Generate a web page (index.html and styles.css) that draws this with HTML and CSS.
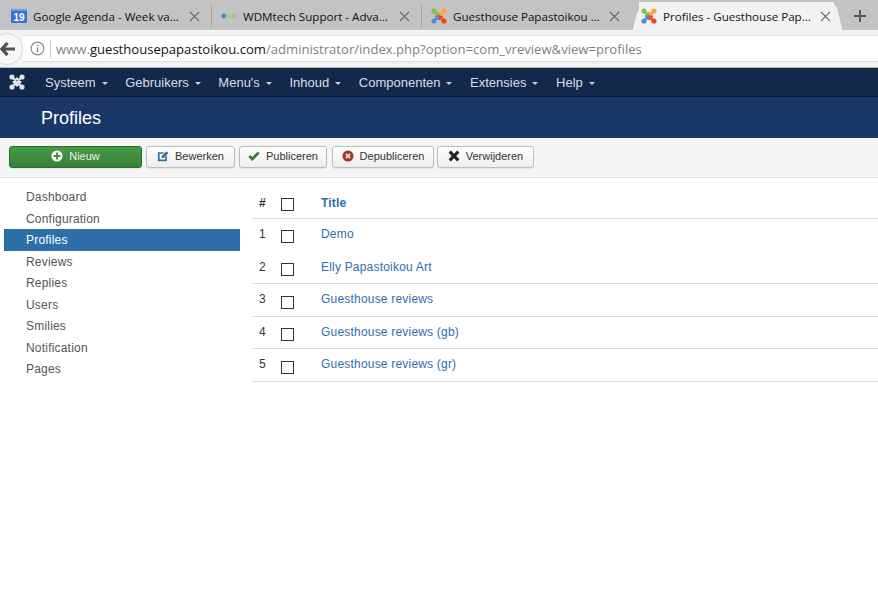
FILE: index.html
```html
<!DOCTYPE html>
<html lang="nl">
<head>
<meta charset="utf-8">
<title>Profiles - Guesthouse Papastoikou</title>
<link rel="stylesheet" href="styles.css">
</head>
<body>
<svg class="defs" width="0" height="0">
  <defs>
    <g id="joomla" fill="none" stroke-width="2.3">
      <path stroke="#7ac143" d="M3 3L8.5 8.5M4.5 8L8 4.5"/>
      <circle cx="3" cy="3" r="2.6" fill="#7ac143"/>
      <path stroke="#f9a541" d="M13 3L7.5 8.5M8 4.5L11.5 8"/>
      <circle cx="13" cy="3" r="2.6" fill="#f9a541"/>
      <path stroke="#5091cd" d="M3 13L8.5 7.5M8 11.5L4.5 8"/>
      <circle cx="3" cy="13" r="2.6" fill="#5091cd"/>
      <path stroke="#f44321" d="M13 13L7.5 7.5M11.5 8L8 11.5"/>
      <circle cx="13" cy="13" r="2.6" fill="#f44321"/>
    </g>
    <g id="close">
      <path d="M1 1 L11 11 M11 1 L1 11" fill="none" stroke="#5f5f5f" stroke-width="1.2"/>
    </g>
  </defs>
</svg>

<div class="tabstrip">
  <div class="tab">
    <svg class="fav" viewBox="0 0 16 16"><rect y="1" width="16" height="14" rx="1" fill="#3a6fd8"/><rect y="1" width="16" height="2" fill="#6f9ae8"/><text x="8" y="13" class="cal">19</text></svg>
    <span class="tab-title">Google Agenda - Week va...</span>
    <svg class="x" viewBox="0 0 12 12"><use href="#close"/></svg>
  </div>
  <div class="tab">
    <svg class="fav" viewBox="0 0 16 16"><circle cx="2.8" cy="8" r="2.4" fill="#3b8fe0"/><circle cx="8.2" cy="8" r="2.4" fill="#a5d75c"/><circle cx="13.4" cy="8" r="2.4" fill="#b3b3b3"/></svg>
    <span class="tab-title">WDMtech Support - Adva...</span>
    <svg class="x" viewBox="0 0 12 12"><use href="#close"/></svg>
  </div>
  <div class="tab">
    <svg class="fav" viewBox="0 0 16 16"><use href="#joomla"/></svg>
    <span class="tab-title">Guesthouse Papastoikou ...</span>
    <svg class="x" viewBox="0 0 12 12"><use href="#close"/></svg>
  </div>
  <div class="tab tab-active">
    <svg class="fav" viewBox="0 0 16 16"><use href="#joomla"/></svg>
    <span class="tab-title">Profiles - Guesthouse Pap...</span>
    <svg class="x" viewBox="0 0 12 12"><use href="#close"/></svg>
  </div>
  <svg class="plus" viewBox="0 0 12 12"><path d="M6 0V12M0 6H12" stroke="#5a5a5a" stroke-width="2"/></svg>
</div>

<div class="addressbar">
  <div class="back">
    <svg viewBox="0 0 15 14" width="15" height="14"><path d="M7.5 1 L2 7 L7.5 13 M2.5 7 H15" fill="none" stroke="#505050" stroke-width="3.2"/></svg>
  </div>
  <div class="omnibox">
    <svg class="info" viewBox="0 0 16 16"><circle cx="8" cy="8" r="6.8" fill="none" stroke="#8a8a8a" stroke-width="1.2"/><path d="M8 7V12M8 4V5.6" stroke="#8a8a8a" stroke-width="1.6"/></svg>
    <span class="url"><span class="url-dim">www.</span><span class="url-host">guesthousepapastoikou.com</span><span class="url-dim">/administrator/index.php?option=com_vreview&amp;view=profiles</span></span>
  </div>
</div>

<nav class="navbar">
  <svg class="brand" viewBox="0 0 16 16"><g fill="#dfe3ea"><circle cx="3" cy="3" r="2.6"/><circle cx="13" cy="3" r="2.6"/><circle cx="3" cy="13" r="2.6"/><circle cx="13" cy="13" r="2.6"/></g><path d="M3 3L13 13M13 3L3 13M8 4.5L11.5 8L8 11.5L4.5 8Z" fill="none" stroke="#dfe3ea" stroke-width="2"/></svg>
  <a class="nav-item">Systeem<i class="caret"></i></a>
  <a class="nav-item">Gebruikers<i class="caret"></i></a>
  <a class="nav-item">Menu's<i class="caret"></i></a>
  <a class="nav-item">Inhoud<i class="caret"></i></a>
  <a class="nav-item">Componenten<i class="caret"></i></a>
  <a class="nav-item">Extensies<i class="caret"></i></a>
  <a class="nav-item">Help<i class="caret"></i></a>
</nav>

<header class="titlebar"><h1>Profiles</h1></header>

<div class="toolbar">
  <button class="btn btn-new"><svg class="ico" viewBox="0 0 14 14"><circle cx="7" cy="7" r="6.5" fill="#fff"/><path d="M7 3V11M3 7H11" stroke="#3f8c3c" stroke-width="2.2"/></svg>Nieuw</button>
  <button class="btn btn-edit"><svg class="ico" viewBox="0 0 14 14"><path d="M1 2.5H8.5L6.5 4.5H3V11H9.5V8L11.5 6V13H1Z" fill="#2f6f97"/><path d="M5.5 7L11 1.5L13.2 3.7L7.7 9.2H5.5Z" fill="#2f6f97"/></svg>Bewerken</button>
  <button class="btn btn-pub"><svg class="ico" viewBox="0 0 14 14"><path d="M1.5 7L5 10.5L12.5 3" fill="none" stroke="#378137" stroke-width="3.2"/></svg>Publiceren</button>
  <button class="btn btn-unpub"><svg class="ico" viewBox="0 0 14 14"><circle cx="7" cy="7" r="6.5" fill="#a03b22"/><path d="M4.6 4.6L9.4 9.4M9.4 4.6L4.6 9.4" stroke="#f0e0d8" stroke-width="2"/></svg>Depubliceren</button>
  <button class="btn btn-del"><svg class="ico" viewBox="0 0 14 14"><path d="M2 2L12 12M12 2L2 12" stroke="#222" stroke-width="3.6"/></svg>Verwijderen</button>
</div>

<main class="content">
  <ul class="sidebar">
    <li>Dashboard</li>
    <li>Configuration</li>
    <li class="active">Profiles</li>
    <li>Reviews</li>
    <li>Replies</li>
    <li>Users</li>
    <li>Smilies</li>
    <li>Notification</li>
    <li>Pages</li>
  </ul>
  <table class="list">
    <thead>
      <tr><th class="c-num">#</th><th class="c-check"><span class="box"></span></th><th class="c-title">Title</th></tr>
    </thead>
    <tbody>
      <tr><td class="c-num">1</td><td class="c-check"><span class="box"></span></td><td class="c-title">Demo</td></tr>
      <tr><td class="c-num">2</td><td class="c-check"><span class="box"></span></td><td class="c-title">Elly Papastoikou Art</td></tr>
      <tr><td class="c-num">3</td><td class="c-check"><span class="box"></span></td><td class="c-title">Guesthouse reviews</td></tr>
      <tr><td class="c-num">4</td><td class="c-check"><span class="box"></span></td><td class="c-title">Guesthouse reviews (gb)</td></tr>
      <tr><td class="c-num">5</td><td class="c-check"><span class="box"></span></td><td class="c-title">Guesthouse reviews (gr)</td></tr>
    </tbody>
  </table>
</main>
</body>
</html>
```

FILE: styles.css
```css
* { box-sizing: border-box; }
html, body { margin: 0; padding: 0; background: #fff; overflow: hidden; }
body { width: 878px; height: 600px; font-family: "Liberation Sans", Arial, sans-serif; }
.defs { position: absolute; }

/* browser tab strip */
.tabstrip { height: 30px; background: #c3c3c3; display: flex; align-items: flex-start; padding-left: 1px; }
.tab { width: 210px; height: 30px; display: flex; align-items: center; padding: 2px 0 0 10px; font-family: "Open Sans", sans-serif; font-size: 11.6px; color: #111; position: relative; flex: none; }
.tab + .tab::before { content: ""; position: absolute; left: 0; top: 5px; width: 1px; height: 22px; background: #a2a2a2; }
.fav { width: 16px; height: 16px; flex: none; margin-right: 6px; }
.cal { font: bold 10px "Liberation Sans", sans-serif; fill: #fff; text-anchor: middle; }
.tab-title { width: 156px; white-space: nowrap; overflow: hidden; flex: none; }
.x { width: 11px; height: 11px; flex: none; }
.tab-active { width: 211px; height: 28px; margin: 2px 0 0 0; padding: 0 0 0 10px; z-index: 0; background: linear-gradient(#f2f2f2, #f2f2f2) 8px 0 / 195px 100% no-repeat; }
.tab-active .tab-title { width: 157px; }
.tab-active::before, .tab-active::after { content: ""; position: absolute; top: 0; width: 16px; height: 28px; background: #f2f2f2; z-index: -1; }
.tab + .tab-active::before { left: 3.5px; width: 16px; height: 28px; background: #f2f2f2; transform: skewX(-14deg); border-radius: 7px 0 0 0; }
.tab-active::after { right: 3.5px; transform: skewX(14deg); border-radius: 0 7px 0 0; }
.plus { width: 12px; height: 12px; margin: 10px 0 0 12px; flex: none; }

/* address bar */
.addressbar { height: 38px; background: #f2f2f2; display: flex; padding-top: 5px; border-bottom: 1px solid #b5b5b5; }
.back { width: 32px; height: 32px; margin: -2px 0 0 -9px; flex: none; display: flex; align-items: center; justify-content: center; padding-left: 1px; background: #f8f8f8; border: 1px solid #d9d9d9; border-radius: 50%; }
.omnibox { flex: 1; height: 27px; background: #fff; border-top: 1px solid #e4e4e4; border-bottom: 1px solid #dcdcdc; display: flex; align-items: center; }
.info { width: 15px; height: 15px; margin: 0 5px 0 7px; flex: none; }
.url { border-left: 1px solid #cfcfcf; padding: 1px 0 0 5px; font-family: "Open Sans", sans-serif; font-size: 13.1px; line-height: 17px; white-space: nowrap; }
.url-dim { color: #7f7f7f; }
.url-host { color: #111; }

/* Joomla navbar */
.navbar { height: 29px; background: #13294b; border-bottom: 1px solid #0a1a33; display: flex; align-items: center; padding-left: 9px; color: #d8dee8; font-size: 13px; }
.brand { width: 16px; height: 16px; flex: none; margin-right: 20px; }
.nav-item { display: flex; align-items: center; margin-right: 17.6px; white-space: nowrap; }
.caret { width: 0; height: 0; margin-left: 6px; margin-top: 2px; border-left: 3px solid transparent; border-right: 3px solid transparent; border-top: 3px solid #c8d0dc; }

.titlebar { height: 41px; background: #1a3867; display: flex; align-items: center; padding: 1px 0 0 41px; }
.titlebar h1 { margin: 0; font-size: 18px; font-weight: normal; color: #fff; }

/* toolbar */
.toolbar { height: 40px; background: #f5f5f5; border-bottom: 1px solid #e4e4e4; display: flex; align-items: flex-start; padding: 8px 0 0 9px; gap: 4px; }
.btn { height: 22px; padding: 0 0 2px; display: flex; align-items: center; justify-content: center; font: 11px "Liberation Sans", sans-serif; color: #333; background: linear-gradient(#fff, #eee); border: 1px solid #bdbdbd; border-radius: 3px; box-shadow: 0 1px 1px rgba(0,0,0,.08); white-space: nowrap; }
.ico { width: 12px; height: 12px; margin-right: 6px; flex: none; }
.btn-new { width: 133px; background: linear-gradient(#459c44, #37803a); border-color: #2f6b30; color: #e8f2e8; }
.btn-edit { width: 89px; }
.btn-pub { width: 88px; }
.btn-unpub { width: 102px; margin-left: 1px; }
.btn-del { width: 97px; margin-left: -1px; }

/* content */
.content { display: flex; align-items: flex-start; }
.sidebar { list-style: none; margin: 8px 0 0 4px; padding: 0; width: 236px; flex: none; font-size: 12px; letter-spacing: .2px; color: #555; }
.sidebar li { height: 21.5px; line-height: 23px; padding-left: 22px; }
.sidebar .active { background: #2d6fa8; color: #fff; }

.list { margin: 9px 0 0 12px; width: 626px; border-collapse: separate; border-spacing: 0; font-size: 12px; letter-spacing: .2px; color: #333; }
.list th, .list td { padding: 0; text-align: left; border-bottom: 1px solid #ddd; }
.list th { height: 32px; vertical-align: middle; }
.list td { height: 33px; vertical-align: top; padding-top: 8px; }
.list tr:nth-child(1) td, .list tr:nth-child(4) td { height: 32px; }
.list tr:nth-child(1) td { border-bottom: 0; }
.list tr:nth-child(2) td.c-num, .list tr:nth-child(2) td.c-title { padding-top: 9px; }
.list .c-num { width: 22px; padding-left: 7px; }
.list .c-check { width: 47px; padding-left: 7px; }
.list th.c-check { padding-top: 4px; }
.list td.c-check { padding-top: 12px; }
.list tr:nth-child(1) td.c-check, .list tr:nth-child(4) td.c-check { padding-top: 11px; }
.c-title { color: #2f6fa8; }
.box { display: block; width: 13px; height: 13px; border: 1px solid #333; background: #fff; }
```
